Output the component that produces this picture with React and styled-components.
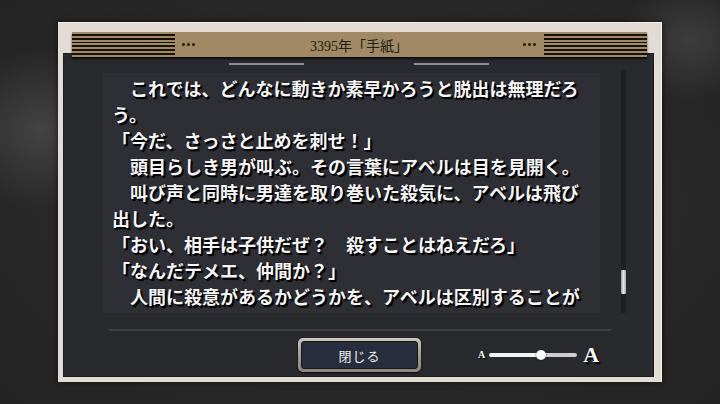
import React from "react";
import styled, { createGlobalStyle } from "styled-components";

const Global = createGlobalStyle`
  html, body { margin: 0; padding: 0; }
  body {
    width: 720px; height: 404px; overflow: hidden;
    background: #2a2a2a;
    font-family: "Liberation Serif", "Noto Sans CJK JP", serif;
  }
`;

const Page = styled.div`
  width: 720px; height: 404px; box-sizing: border-box;
  padding: 22px 0 0 58px;
  background:
    radial-gradient(ellipse 90px 80px at 40px 130px, rgba(95,95,95,0.5), transparent),
    radial-gradient(ellipse 70px 60px at 690px 40px, rgba(85,85,85,0.5), transparent),
    radial-gradient(ellipse 500px 300px at 360px 200px, #2e2e2e, #242424);
`;

const Frame = styled.div`
  width: 604px; height: 360px; box-sizing: border-box;
  background: #e2dcd4;
  border-top: 1px solid #f2eee8;
  border-right: 1px solid #f6f3ee;
  box-shadow: 0 0 6px rgba(0,0,0,0.6);
  padding: 9px 14px 5px 14px;
  display: flex; flex-direction: column;
`;

const Header = styled.div`
  position: relative; z-index: 2;
  height: 25px;
  background: #a08964;
  display: flex; align-items: center;
  box-shadow: 0 2px 2px rgba(0,0,0,0.7);
  margin-bottom: -4px;
`;

const Stripes = styled.div`
  width: 103px; height: 25px;
  background: repeating-linear-gradient(to bottom, #a08964 0 2px, #15120e 2px 3.8px);
`;

const Dots = styled.div`
  display: flex; gap: 2px; margin: ${p => (p.$right ? "0 8px 0 0" : "0 0 0 7px")};
  span { width: 3px; height: 3px; border-radius: 50%; background: #1e1a14; }
`;

const Title = styled.div`
  flex: 1; text-align: center;
  font-family: "Liberation Serif", "Noto Sans CJK JP", serif;
  font-size: 14px; color: #231d15;
  padding-top: 1px;
`;

const Panel = styled.div`
  flex: 1;
  margin: 0 -7px 0 -9px;
  background: #282a2e;
  border: 1px solid #1b1c1f;
  display: flex; flex-direction: column;
  padding-top: 9px;
`;

const DecoRow = styled.div`
  display: flex; justify-content: center; gap: 110px;
  height: 2px;
  span { width: 75px; height: 2px; background: #8c8c8e; }
`;

const Body = styled.div`
  display: flex; margin-top: 8px; padding-left: 39px;
`;

const TextBox = styled.div`
  width: 497px; height: 240px; box-sizing: border-box;
  background: #2e2f35;
  padding: 2px 18px 0 9px;
  overflow: hidden;
  font-family: "Noto Sans CJK JP", sans-serif;
  font-weight: 700;
  font-size: 18px; line-height: 26px;
  color: #f6f6f6;
  text-shadow: 1.5px 1.5px 0 #000, 2px 2px 1px #000, 0 0 1px #000;
`;

const Para = styled.p`
  margin: 0;
  text-indent: ${p => (p.$indent ? "1em" : "0")};
  line-break: strict;
`;

const Track = styled.div`
  position: relative;
  width: 5px; height: 243px; margin: -3px 0 0 21px;
  background: #1f2024;
`;

const Thumb = styled.div`
  position: absolute; left: 0; top: 200px;
  width: 5px; height: 24px; border-radius: 1px;
  background: linear-gradient(to right, #9a9a9a, #e8e8e8 50%, #a8a8a8);
`;

const Separator = styled.div`
  margin: 16px 0 0 45px; width: 502px; height: 2px;
  background: #3d4048;
`;

const Footer = styled.div`
  display: flex; align-items: center;
  margin-top: 7px; padding-left: 234px;
`;

const Button = styled.button`
  width: 123px; height: 34px; box-sizing: border-box;
  padding: 3px; border: none; border-radius: 5px;
  background: linear-gradient(to bottom, #cfc8b8, #a59d8d 50%, #8e877a);
  box-shadow: 0 1px 2px rgba(0,0,0,0.8);
  cursor: pointer;
  span {
    display: flex; align-items: center; justify-content: center;
    height: 100%; border-radius: 3px;
    background: #272e3e;
    border: 1px solid #14171e; box-sizing: border-box;
    font-family: "Liberation Serif", "Noto Sans CJK JP", serif;
    font-size: 13px; color: #eeeeee; letter-spacing: 1px;
  }
`;

const SizeLetter = styled.span`
  font-family: "Liberation Serif", serif; font-weight: 700;
  color: #fafafa;
  margin-left: ${p => (p.$big ? "0" : "57px")};
  font-size: ${p => (p.$big ? "22px" : "10px")};
  text-shadow: ${p => (p.$big ? "2px 2px 1px #000" : "1px 1px 0 #000")};
  line-height: 1;
`;

const Slider = styled.div`
  position: relative; width: 88px; height: 4px; margin: 0 6px 0 4px;
  border-radius: 2px;
  background: linear-gradient(to right, #f4f4f4 0 52px, #cfcfcf 52px);
`;

const Knob = styled.div`
  position: absolute; top: -3px; left: 47px;
  width: 10px; height: 10px; border-radius: 50%;
  background: #ffffff;
  box-shadow: 0 0 2px rgba(0,0,0,0.6);
`;

const paragraphs = [
  { indent: true, text: "これでは、どんなに動きか素早かろうと脱出は無理だろう。" },
  { indent: false, text: "「今だ、さっさと止めを刺せ！」" },
  { indent: true, text: "頭目らしき男が叫ぶ。その言葉にアベルは目を見開く。" },
  { indent: true, text: "叫び声と同時に男達を取り巻いた殺気に、アベルは飛び出した。" },
  { indent: false, text: "「おい、相手は子供だぜ？　殺すことはねえだろ」" },
  { indent: false, text: "「なんだテメエ、仲間か？」" },
  { indent: true, text: "人間に殺意があるかどうかを、アベルは区別することが" },
];

export default function App() {
  return (
    <>
      <Global />
      <Page>
        <Frame>
          <Header>
            <Stripes />
            <Dots><span /><span /><span /></Dots>
            <Title>3395年「手紙」</Title>
            <Dots $right><span /><span /><span /></Dots>
            <Stripes />
          </Header>
          <Panel>
            <DecoRow><span /><span /></DecoRow>
            <Body>
              <TextBox>
                {paragraphs.map((p, i) => (
                  <Para key={i} $indent={p.indent}>{p.text}</Para>
                ))}
              </TextBox>
              <Track><Thumb /></Track>
            </Body>
            <Separator />
            <Footer>
              <Button><span>閉じる</span></Button>
              <SizeLetter>A</SizeLetter>
              <Slider><Knob /></Slider>
              <SizeLetter $big>A</SizeLetter>
            </Footer>
          </Panel>
        </Frame>
      </Page>
    </>
  );
}
